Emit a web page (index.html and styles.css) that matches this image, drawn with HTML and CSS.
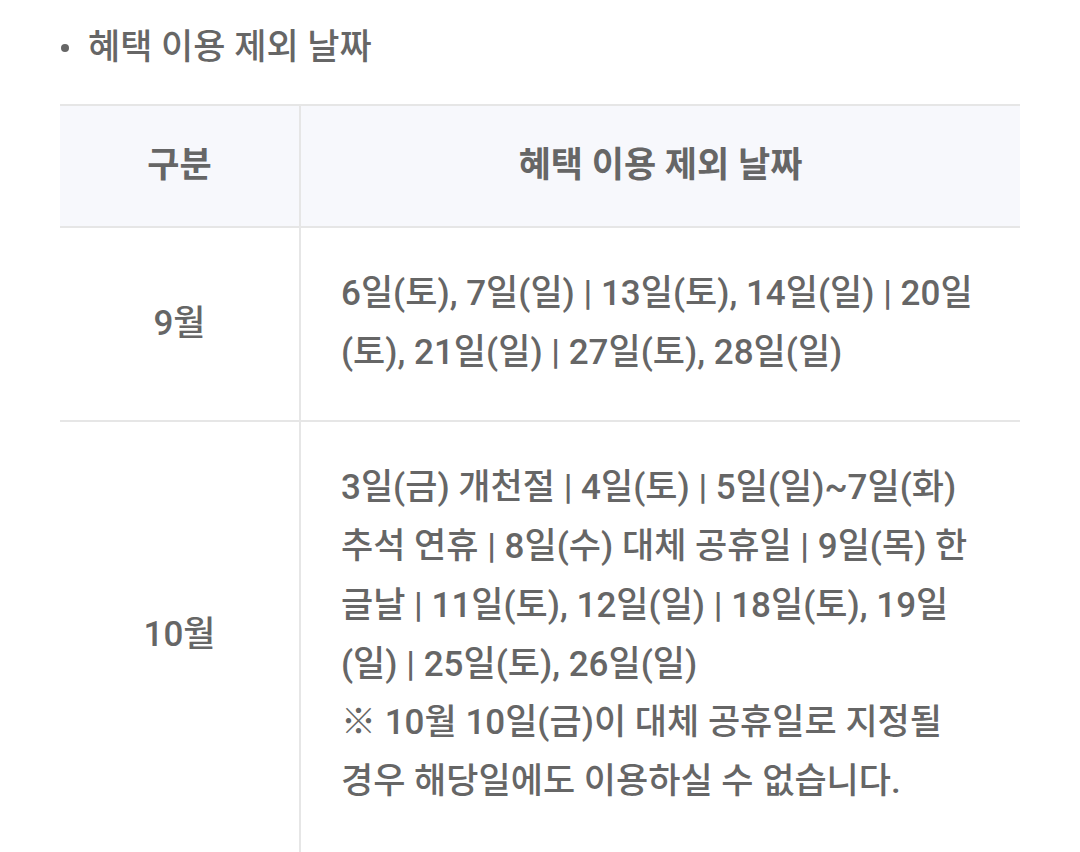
FILE: index.html
```
<!DOCTYPE html>
<html lang="ko">
<head>
<meta charset="utf-8">
<link rel="stylesheet" href="styles.css">
</head>
<body>
<div class="page">
  <h3 class="title"><span class="dot"></span>혜택 이용 제외 날짜</h3>
  <table class="tbl">
    <colgroup><col class="c1"><col class="c2"></colgroup>
    <thead>
      <tr><th>구분</th><th>혜택 이용 제외 날짜</th></tr>
    </thead>
    <tbody>
      <tr>
        <td class="month">9월</td>
        <td class="dates">6일(토), 7일(일) | 13일(토), 14일(일) | 20일(토), 21일(일) | 27일(토), 28일(일)</td>
      </tr>
      <tr class="last">
        <td class="month">10월</td>
        <td class="dates">3일(금) 개천절 | 4일(토) | 5일(일)~7일(화) 추석 연휴 | 8일(수) 대체 공휴일 | 9일(목) 한글날 | 11일(토), 12일(일) | 18일(토), 19일(일) | 25일(토), 26일(일)<br>※ 10월 10일(금)이 대체 공휴일로 지정될 경우 해당일에도 이용하실 수 없습니다.</td>
      </tr>
    </tbody>
  </table>
</div>
</body>
</html>
```
FILE: styles.css
```
html, body { margin: 0; padding: 0; background: #fff; }
body {
  font-family: Roboto, "Noto Sans CJK KR", sans-serif;
  color: #666;
}
.page { padding: 22px 60px 0 60px; }
.title {
  margin: 0;
  font-size: 35px;
  font-weight: 500;
  line-height: 52px;
  display: flex;
  align-items: center;
}
.dot {
  width: 8px;
  height: 8px;
  border-radius: 50%;
  background: #666;
  margin: 0 19px 0 1px;
  flex: none;
}
.tbl {
  margin-top: 30px;
  width: 960px;
  border-collapse: collapse;
  table-layout: fixed;
}
.c1 { width: 240px; }
.tbl th, .tbl td { border: 2px solid #e6e6e6; }
.tbl tr > :first-child { border-left: none; }
.tbl tr > :last-child { border-right: none; }
.tbl tr.last > td { border-bottom: none; }
.tbl th {
  background: #f7f8fc;
  font-size: 35px;
  font-weight: 700;
  line-height: 58px;
  padding: 31px 0;
}
.tbl td {
  font-size: 35px;
  line-height: 58.8px;
  padding: 37.2px 40px;
}
.tbl tr.last > td { padding-bottom: 60px; }
.month { text-align: center; font-weight: 500; }
.dates { text-align: left; font-weight: 500; }
```
